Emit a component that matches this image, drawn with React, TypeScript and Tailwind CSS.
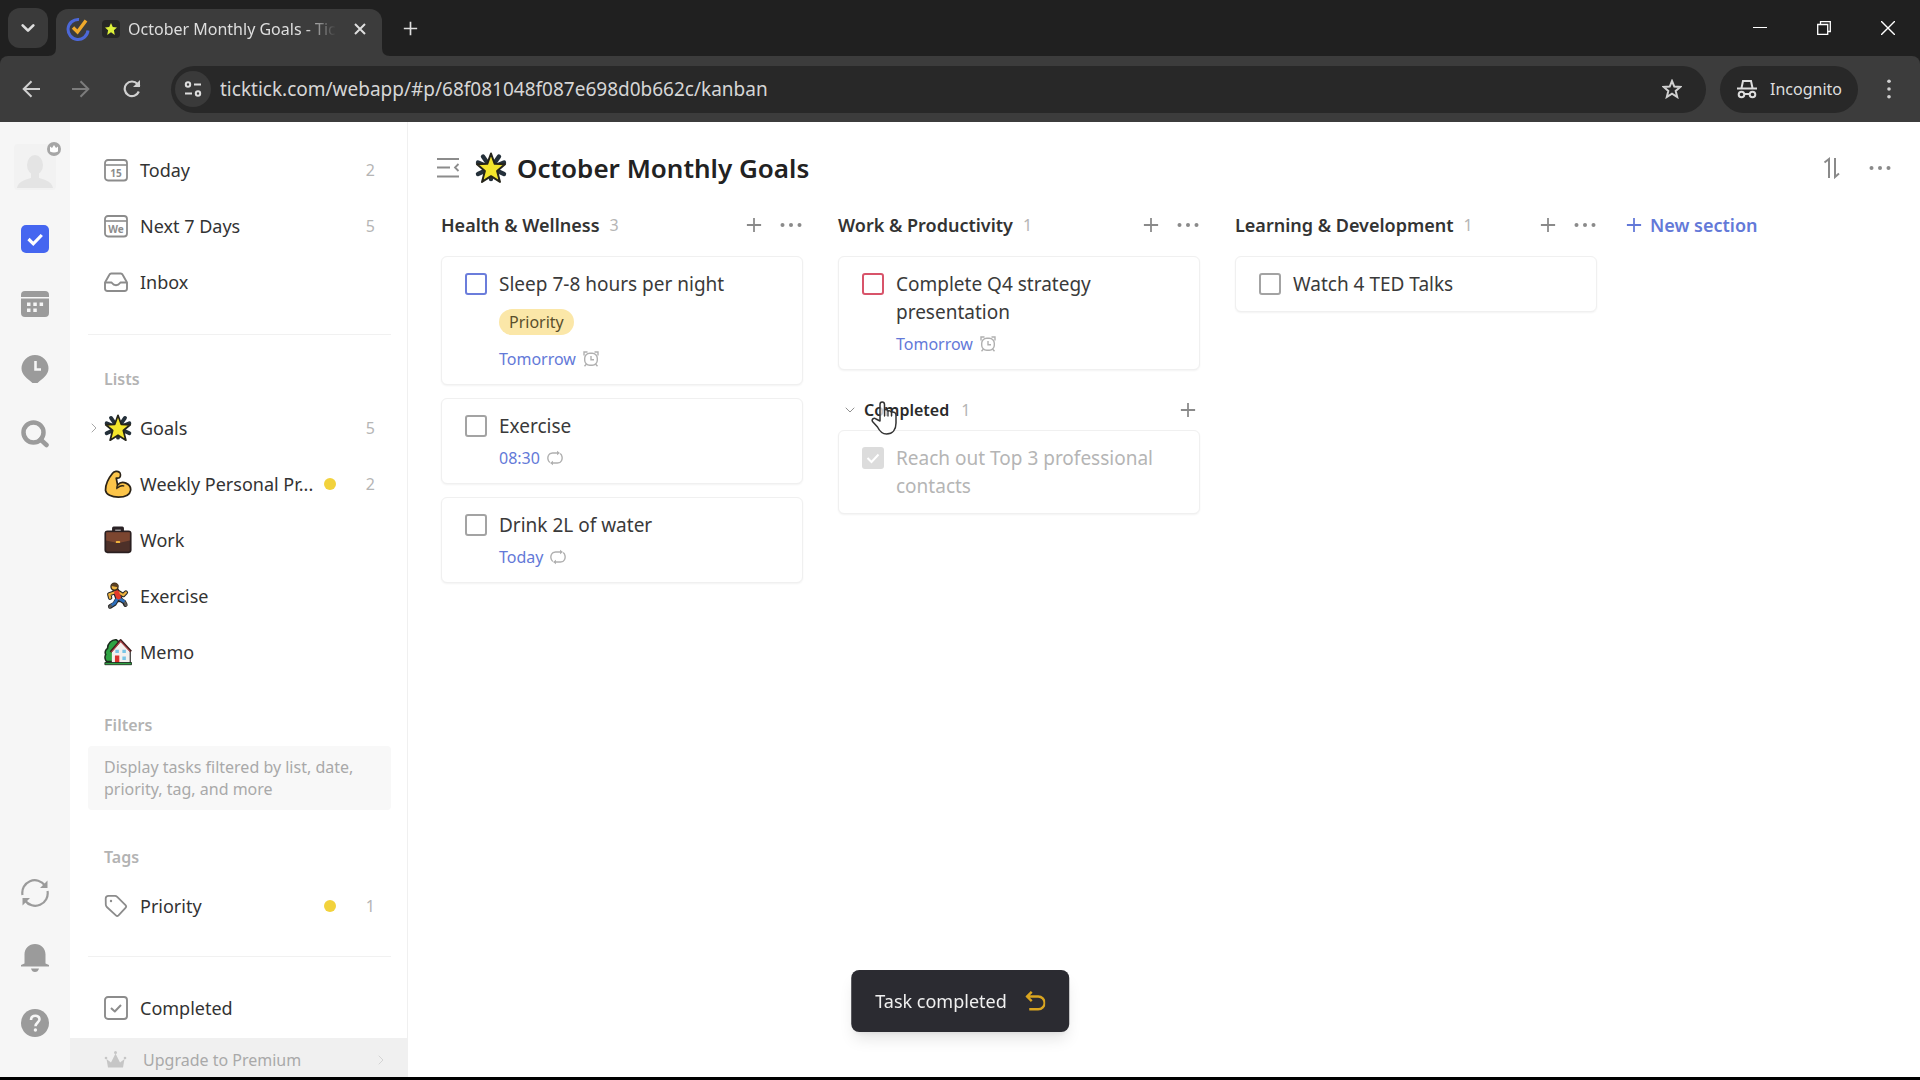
import { FC, ReactElement, ReactNode, useState } from "react";

type IconProps = { className?: string };

const StarEmoji: FC<IconProps> = ({ className }) => (
  <svg viewBox="0 0 32 32" className={className} aria-hidden="true">
    <g stroke="#24303a" strokeWidth="4.4" strokeLinecap="round">
      <path d="M16 16 8 4.500M16 16 24 4.500M16 16 3 10.500M16 16 29 10.500M16 16 3 22M16 16 29 22M16 16v11" />
    </g>
    <path
      d="M16 1.500 19.700 11.800l10.300.5-7.900 6.600 2.900 11L16 24.200 7 29.900l2.900-11L2 12.300l10.300-.5z"
      fill="#f4e62c"
      stroke="#25241a"
      strokeWidth="2"
      strokeLinejoin="round"
    />
  </svg>
);

const ArmEmoji: FC<IconProps> = ({ className }) => (
  <svg viewBox="0 0 32 32" className={className} aria-hidden="true">
    <path
      d="M10 3.500C11.500 1.500 15.500 1 17.500 2.500c1.500 1.200 1.500 4 .8 5.500-.6 1.500-2.300 1.500-4.300 1.200l1.500 8c2.500-3 6-3.700 9.500-2.200 4 1.800 6 5 5.300 8.600C29.500 28.500 23.500 31 16.500 31 8.500 31 2.500 28 1.800 23.500 1.500 17 5.500 9 10 3.500z"
      fill="#fcc54a"
      stroke="#2b2317"
      strokeWidth="2"
      strokeLinejoin="round"
    />
    <path d="M15.500 17.200c-.8 1.300-1 2.500-.8 4M16 20c2-2 4-2.300 6.500-1.800" fill="none" stroke="#2b2317" strokeWidth="1.600" strokeLinecap="round" />
  </svg>
);

const BriefcaseEmoji: FC<IconProps> = ({ className }) => (
  <svg viewBox="0 0 32 32" className={className} aria-hidden="true">
    <path d="M11 6V2.500h10V6" fill="none" stroke="#2a2226" strokeWidth="3.600" strokeLinejoin="round" />
    <rect x="1.500" y="6" width="29" height="24" rx="2.500" fill="#4d3029" stroke="#2a1f20" strokeWidth="2" />
    <path d="M2.500 7h27v9.500L18 19h-4L2.500 16.500z" fill="#7c4630" />
    <rect x="13.500" y="17" width="5" height="2.500" rx="1" fill="#f0b33c" />
  </svg>
);

const RunnerEmoji: FC<IconProps> = ({ className }) => (
  <svg viewBox="0 0 32 32" className={className} aria-hidden="true">
    <g fill="none" strokeLinecap="round" strokeLinejoin="round">
      <path d="M17 19l6 4 1.500 3M15 20l-3 5-5 3M17 12l5 3 3-3M12 12l-6 2 1 4" stroke="#262626" strokeWidth="5" />
      <path d="M14 11l3 8" stroke="#262626" strokeWidth="8" />
      <path d="M17 12l5 3 3-3M12 12l-6 2 1 4" stroke="#eeb23f" strokeWidth="2.600" />
      <path d="M16.500 18.500 22.500 22M15 19.500l-3 5-3 2" stroke="#2c6fbd" strokeWidth="3.200" />
      <path d="M24 23.500l1 3M8 27l-1.500 1.500" stroke="#5c5c5c" strokeWidth="2.600" />
      <path d="M14.500 12l2 5" stroke="#e33a2c" strokeWidth="5.600" />
    </g>
    <circle cx="12" cy="5.500" r="4" fill="#f0b744" stroke="#3a2c1c" strokeWidth="1.600" />
    <path d="M8.500 4.500c1-3.500 6-4 8-1l-.5 2.500z" fill="#5b4023" />
  </svg>
);

const HouseEmoji: FC<IconProps> = ({ className }) => (
  <svg viewBox="0 0 32 32" className={className} aria-hidden="true">
    <path d="M3 27c-2-2-2.500-6-1-8-1.500-3 0-6 2-7C4 6 9 1.500 14 2l4 3v22z" fill="#2fa343" stroke="#1c2b1e" strokeWidth="1.800" />
    <path d="M9 14.500 19 3.500l10 11V29H9z" fill="#f3f0ee" />
    <path d="M30 14.500V29" stroke="#33302f" strokeWidth="1.400" />
    <path d="M7.500 16 19 2.500 31 15.500" fill="none" stroke="#3a1d1d" strokeWidth="2.600" strokeLinejoin="round" />
    <path d="M8.500 16 19 3.800 30 15.500" fill="none" stroke="#b8474a" strokeWidth="1.200" />
    <path d="M13 13.500h4v3.500h-4zM21 13.500h4v3.500h-4zM21 21h4v4h-4z" fill="#79c5e6" />
    <path d="M12.500 20h5v9h-5z" fill="#d8322f" />
    <path d="M1 30.500h30.500V28H1z" fill="#2fa343" stroke="#1c2b1e" strokeWidth="1" />
  </svg>
);

const CalendarIcon: FC<{ text: string }> = ({ text }) => (
  <svg viewBox="0 0 24 24" className="size-6" aria-hidden="true">
    <rect x="1" y="2" width="22" height="20.500" rx="3" fill="none" stroke="#8c8c8c" strokeWidth="1.800" />
    <path d="M1 7h22" stroke="#8c8c8c" strokeWidth="1.600" />
    <text x="12" y="18.500" textAnchor="middle" fontSize="10" fontWeight="700" fill="#8c8c8c" fontFamily="Noto Sans, sans-serif">
      {text}
    </text>
  </svg>
);

const InboxIcon: FC = () => (
  <svg viewBox="0 0 24 24" className="size-6" fill="none" stroke="#8c8c8c" strokeWidth="1.900" strokeLinejoin="round" aria-hidden="true">
    <path d="M1 12.500 5.500 4.500Q6 3.500 7.200 3.500h9.600q1.200 0 1.700 1L23 12.500v6q0 2.500-2.500 2.500h-17Q1 21 1 18.500z" />
    <path d="M1 12.500h6.500c.5 0 1 2.700 4.500 2.700s4-2.700 4.500-2.700H23" />
  </svg>
);

const TagIcon: FC = () => (
  <svg viewBox="0 0 24 24" className="size-6" fill="none" stroke="#8c8c8c" strokeWidth="1.800" strokeLinejoin="round" aria-hidden="true">
    <path d="M4.500 1.800 11 1.900q1.200 0 2.200 1l8.300 8.300q1.300 1.300 0 2.600l-7 7.500q-1.300 1.300-2.600 0L2.800 13q-.9-1-1-2.200L1.700 4.500q0-2.700 2.800-2.700z" />
    <circle cx="7" cy="7" r="1.200" fill="#8c8c8c" stroke="none" />
  </svg>
);

const CompletedIcon: FC = () => (
  <svg viewBox="0 0 24 24" className="size-6" fill="none" stroke="#8c8c8c" strokeWidth="1.900" strokeLinejoin="round" aria-hidden="true">
    <rect x="1" y="1" width="22" height="22" rx="3" />
    <path d="m7 12 3.800 3.500L17 9" strokeWidth="2" />
  </svg>
);

const CrownIcon: FC = () => (
  <svg viewBox="0 0 24 24" className="size-6" aria-hidden="true">
    <path d="M4 19.500h15l1.500-8.500-4.500 3.500-4.500-9-4.500 9L2.500 11z" fill="#c6c6c6" />
    <circle cx="11.500" cy="4.500" r="1.500" fill="#c6c6c6" />
    <circle cx="2" cy="10" r="1.300" fill="#c6c6c6" />
    <circle cx="21" cy="10" r="1.300" fill="#c6c6c6" />
  </svg>
);

const Chevron: FC<IconProps> = ({ className }) => (
  <svg viewBox="0 0 12 12" className={className} fill="none" stroke="currentColor" strokeLinecap="round" strokeLinejoin="round" aria-hidden="true">
    <path d="m2 4 4 4 4-4" />
  </svg>
);

const Plus: FC<IconProps> = ({ className }) => (
  <svg viewBox="0 0 18 18" className={className} fill="none" stroke="currentColor" strokeWidth="2" aria-hidden="true">
    <path d="M9 1v16M1 9h16" />
  </svg>
);

const Dots: FC<IconProps> = ({ className }) => (
  <svg viewBox="0 0 22 22" className={className} fill="currentColor" aria-hidden="true">
    <circle cx="2.500" cy="11" r="2" />
    <circle cx="11" cy="11" r="2" />
    <circle cx="19.500" cy="11" r="2" />
  </svg>
);

const AlarmIcon: FC = () => (
  <svg viewBox="0 0 16 16" className="size-4" fill="none" stroke="#b0b0b0" strokeWidth="1.400" aria-hidden="true">
    <rect x="1.700" y="2.200" width="12.600" height="12" rx="5" />
    <path d="M8 5v3.800h3M1 4.500V1h3.500M15 4.500V1h-3.500M3.500 13 1.500 15.200M12.500 13l2 2.200" />
  </svg>
);

const RepeatIcon: FC = () => (
  <svg viewBox="0 0 16 16" className="size-4" fill="none" stroke="#b0b0b0" strokeWidth="1.400" aria-hidden="true">
    <path d="M2.800 12.500C.8 11 .3 7.500 1.500 5.300 2.300 3.700 3.800 3 5.500 3H11M13.200 3.500c2 1.500 2.500 5 1.300 7.200-.8 1.600-2.300 2.300-4 2.300H5" />
    <path d="M10 .8v4.400l3-2.200zM6 10.800v4.400L3 13z" fill="#b0b0b0" stroke="none" />
  </svg>
);

const BrowserChrome: FC = () => {
  const [url, setUrl] = useState("ticktick.com/webapp/#p/68f081048f087e698d0b662c/kanban");

  return (
    <header className="shrink-0 bg-[#202020] text-[#dedede]">
      <div className="flex h-14 items-center pl-2">
        <button aria-label="Search tabs" className="flex size-10 items-center justify-center rounded-xl bg-[#3a3a3a]">
          <Chevron className="size-4 stroke-2" />
        </button>
        <div className="flex h-full items-end">
          <svg viewBox="0 0 8 8" className="size-2" aria-hidden="true">
            <path d="M8 0v8H0q8 0 8-8z" fill="#3c3c3c" />
          </svg>
          <div className="flex h-[47px] w-[326px] items-center rounded-t-xl bg-[#3c3c3c] pb-2 pl-[10px] pr-[10px]">
            <svg viewBox="0 0 24 24" className="size-6 shrink-0" fill="none" aria-hidden="true">
              <path d="M13 2.500A10 10 0 1 0 22 13.500" stroke="#4c68d8" strokeWidth="3" />
              <path d="m7 10.500 4.500 4.500L20 3.500" stroke="#efa92b" strokeWidth="3.400" />
            </svg>
            <span className="ml-3 flex size-[18px] shrink-0 items-center justify-center rounded bg-[#262626]">
              <svg viewBox="0 0 12 12" className="size-3" aria-hidden="true">
                <path d="m6 0 1.800 4 4.200.4L8.900 7.200 9.800 12 6 9.300 2.200 12l.9-4.800L0 4.400 4.200 4z" fill="#dcf03a" />
              </svg>
            </span>
            <span className="ml-2 flex-1 whitespace-nowrap text-[16px] [mask-image:linear-gradient(to_right,black_85%,transparent)]">
              October Monthly Goals - Tic
            </span>
            <button aria-label="Close tab" className="ml-3 flex size-6 items-center justify-center">
              <svg viewBox="0 0 12 12" className="size-3" stroke="currentColor" strokeWidth="2" aria-hidden="true">
                <path d="m1 1 10 10M11 1 1 11" />
              </svg>
            </button>
          </div>
          <svg viewBox="0 0 8 8" className="size-2" aria-hidden="true">
            <path d="M0 0v8h8Q0 8 0 0z" fill="#3c3c3c" />
          </svg>
        </div>
        <button aria-label="New tab" className="ml-2 flex size-6 items-center justify-center">
          <Plus className="size-[15px]" />
        </button>
        <div className="ml-auto flex text-white">
          <button aria-label="Minimize" className="flex h-14 w-16 items-center justify-center">
            <svg viewBox="0 0 14 14" className="size-[14px]" stroke="currentColor" aria-hidden="true">
              <path d="M0 6.500h14" />
            </svg>
          </button>
          <button aria-label="Restore" className="flex h-14 w-16 items-center justify-center">
            <svg viewBox="0 0 14 14" className="size-[14px]" fill="none" stroke="currentColor" strokeWidth="1.300" aria-hidden="true">
              <path d="M.7 3.500h10v10H.7zM3.500 3.500V.7h9.800v9.800h-2.500" />
            </svg>
          </button>
          <button aria-label="Close window" className="flex h-14 w-16 items-center justify-center">
            <svg viewBox="0 0 14 14" className="size-[14px]" stroke="currentColor" strokeWidth="1.400" aria-hidden="true">
              <path d="m0 0 14 14M14 0 0 14" />
            </svg>
          </button>
        </div>
      </div>
      <div className="flex h-[66px] items-center rounded-t-lg bg-[#3c3c3c] pl-[22px] pr-5">
        <button aria-label="Back" className="flex size-[18px] items-center justify-center">
          <svg viewBox="0 0 18 18" className="size-[18px]" fill="none" stroke="#d0d0d0" strokeWidth="2" aria-hidden="true">
            <path d="M18 9H2M9.500 1.200 1.700 9l7.800 7.800" />
          </svg>
        </button>
        <button aria-label="Forward" className="ml-8 flex size-[18px] items-center justify-center">
          <svg viewBox="0 0 18 18" className="size-[18px]" fill="none" stroke="#7c7c7c" strokeWidth="2" aria-hidden="true">
            <path d="M0 9h16M8.500 1.200 16.300 9l-7.800 7.800" />
          </svg>
        </button>
        <button aria-label="Reload" className="ml-8 flex size-[20px] items-center justify-center">
          <svg viewBox="0 0 18 18" className="size-[18px]" fill="none" stroke="#d0d0d0" strokeWidth="2.200" aria-hidden="true">
            <path d="M15.800 11.500A7.300 7.300 0 1 1 14.500 4L16.500 6.500" />
            <path d="M17 0v7h-7z" fill="#d0d0d0" stroke="none" />
          </svg>
        </button>
        <div className="ml-[29px] flex h-[47px] flex-1 items-center rounded-full bg-[#282828] pl-1 pr-6">
          <button aria-label="View site information" className="flex size-9 items-center justify-center rounded-full bg-[#3a3a3a]">
            <svg viewBox="0 0 18 18" className="size-[18px]" fill="none" stroke="#dedede" strokeWidth="2" aria-hidden="true">
              <circle cx="4" cy="4.500" r="2.200" />
              <path d="M10 4.500h7M1 13.500h7" />
              <circle cx="14" cy="13.500" r="2.200" />
            </svg>
          </button>
          <input
            aria-label="Address"
            value={url}
            onChange={(e) => setUrl(e.target.value)}
            className="ml-[9px] min-w-0 flex-1 bg-transparent text-[19px] text-[#d6d6d6] outline-none"
          />
          <button aria-label="Bookmark this tab" className="flex size-5 items-center justify-center">
            <svg viewBox="0 0 20 20" className="size-5" fill="none" stroke="#d0d0d0" strokeWidth="2" aria-hidden="true">
              <path d="m10 2 2.300 5.600 6 .4-4.600 3.900L15.200 18 10 14.700 4.800 18l1.500-6.100L1.700 8l6-.4z" />
            </svg>
          </button>
        </div>
        <button className="ml-[14px] flex h-[47px] items-center gap-3 rounded-full bg-[#282828] px-4 text-[16px]">
          <svg viewBox="0 0 22 22" className="size-[22px]" fill="none" stroke="#dedede" strokeWidth="2" aria-hidden="true">
            <path d="M1 10.500h20M5.500 10 7 3h8l1.500 7" />
            <circle cx="5.500" cy="16.500" r="2.800" />
            <circle cx="16.500" cy="16.500" r="2.800" />
            <path d="M8.500 16h5" />
          </svg>
          Incognito
        </button>
        <button aria-label="Browser menu" className="ml-5 flex size-[22px] items-center justify-center">
          <Dots className="size-5 rotate-90 text-[#d0d0d0]" />
        </button>
      </div>
    </header>
  );
};

const RailButton: FC<{ label: string; children: ReactNode }> = ({ label, children }) => (
  <button aria-label={label} className="size-7 shrink-0">
    {children}
  </button>
);

const Rail: FC = () => (
  <nav aria-label="Modules" className="flex w-[70px] shrink-0 flex-col items-center bg-[#f6f6f6] pb-10 pt-[22px]">
    <button aria-label="Account" className="relative h-[46px] w-[42px] rounded bg-[#f2f2f2]">
      <svg viewBox="0 0 42 46" className="h-[46px] w-[42px]" aria-hidden="true">
        <ellipse cx="21" cy="21" rx="8" ry="10" fill="#e4e4e4" />
        <path d="M17 28h8v6c7 2 13 4 14 10H3c1-6 7-8 14-10z" fill="#e4e4e4" />
      </svg>
      <span className="absolute -right-[5px] -top-[2px] flex size-[14px] items-center justify-center rounded-full bg-[#a6a6a6]">
        <svg viewBox="0 0 8 8" className="size-2" aria-hidden="true">
          <path d="M0 1.500 2 3l2-3 2 3 2-1.500V6.500q-4 2-8 0z" fill="#fff" />
        </svg>
      </span>
    </button>
    <div className="mt-[35px] flex flex-col items-center gap-[37px]">
      <RailButton label="Tasks">
        <svg viewBox="0 0 28 28" aria-hidden="true">
          <rect width="28" height="28" rx="5" fill="#4566f0" />
          <path d="m7.500 14 4.800 4.800L20.800 10" fill="none" stroke="#fff" strokeWidth="3.200" />
        </svg>
      </RailButton>
      <RailButton label="Calendar">
        <svg viewBox="0 0 28 28" fill="#9b9b9b" aria-hidden="true">
          <path d="M0 7V5q0-4 4-4h20q4 0 4 4v2zM0 8.500h28V23q0 4-4 4H4q-4 0-4-4z" />
          <path d="M6 12.500h3.500V16H6zM12.300 12.500h3.500V16h-3.500zM18.600 12.500h3.500V16h-3.500zM6 18.500h3.500V22H6zM12.300 18.500h3.500V22h-3.500z" fill="#f6f6f6" />
        </svg>
      </RailButton>
      <RailButton label="Habit">
        <svg viewBox="0 0 28 28" aria-hidden="true">
          <path d="M14 0a13.500 13.500 0 0 1 13.500 13.300c0 7-6.500 10.700-11.500 15.200q-2 1.500-4 0C7 24 .5 20.300.5 13.300A13.500 13.500 0 0 1 14 0z" fill="#9b9b9b" />
          <path d="M14.500 6v8.500H20" fill="none" stroke="#f6f6f6" strokeWidth="2.600" />
        </svg>
      </RailButton>
      <RailButton label="Search">
        <svg viewBox="0 0 28 28" fill="none" stroke="#9b9b9b" strokeWidth="4.500" aria-hidden="true">
          <circle cx="12.500" cy="12.500" r="10" />
          <path d="m19.500 19.500 6 5.500" strokeLinecap="round" />
        </svg>
      </RailButton>
    </div>
    <div className="mt-auto flex flex-col items-center gap-[37px]">
      <RailButton label="Sync">
        <svg viewBox="0 0 28 28" fill="none" stroke="#9b9b9b" strokeWidth="2.200" aria-hidden="true">
          <path d="M1.500 16A12.500 12.500 0 0 1 24 6.500M26.500 12A12.500 12.500 0 0 1 4 21.500" />
          <path d="M26.500 1.500V9h-7.500zM1.500 26.500V19H9z" fill="#9b9b9b" stroke="none" />
        </svg>
      </RailButton>
      <RailButton label="Notifications">
        <svg viewBox="0 0 28 28" fill="#9b9b9b" aria-hidden="true">
          <path d="M14 0C20 0 24.500 4.500 24.500 10.500V19.500L28 21v1.500H0V21l3.500-1.500v-9C3.500 4.500 8 0 14 0zM10 24.500h8q-1 3.500-4 3.500t-4-3.500z" />
        </svg>
      </RailButton>
      <RailButton label="Help">
        <svg viewBox="0 0 28 28" aria-hidden="true">
          <circle cx="14" cy="14" r="14" fill="#9b9b9b" />
          <path d="M10 11c0-5.500 8.500-5.500 8.500-.7 0 3.200-4 3.300-4 7" fill="none" stroke="#f6f6f6" strokeWidth="2.600" />
          <circle cx="14.400" cy="21" r="1.700" fill="#f6f6f6" />
        </svg>
      </RailButton>
    </div>
  </nav>
);

type SideRowProps = {
  icon: ReactNode;
  label: string;
  count?: number;
  dot?: boolean;
  expandable?: boolean;
};

const SideRow: FC<SideRowProps> = ({ icon, label, count, dot, expandable }) => (
  <li>
    <a href="#" className="flex h-14 items-center pl-[14px] pr-8 text-[18px] text-[#333]">
      <span className="flex w-5 shrink-0 justify-center text-[#a8a8a8]">
        {expandable && <Chevron className="size-3 -rotate-90" />}
      </span>
      <span className="mr-2 flex w-7 shrink-0 items-center">{icon}</span>
      <span className="flex-1 whitespace-nowrap">{label}</span>
      {dot && <span className="size-3 shrink-0 rounded-full bg-[#f2d23c]" />}
      {count !== undefined && <span className="w-[39px] shrink-0 text-right text-[16px] text-[#b5b5b5]">{count}</span>}
    </a>
  </li>
);

const Sidebar: FC = () => (
  <aside className="flex w-[338px] shrink-0 flex-col overflow-hidden border-r border-[#f0f0f0] bg-white pt-5">
    <ul>
      <SideRow icon={<CalendarIcon text="15" />} label="Today" count={2} />
      <SideRow icon={<CalendarIcon text="We" />} label="Next 7 Days" count={5} />
      <SideRow icon={<InboxIcon />} label="Inbox" />
    </ul>
    <hr className="ml-[18px] mr-4 mt-6 border-[#f1f1f1]" />
    <h2 className="mt-8 pl-[34px] text-[16px] font-semibold leading-6 text-[#b3b3b3]">Lists</h2>
    <ul className="mt-[9px]">
      <SideRow icon={<StarEmoji className="size-7" />} label="Goals" count={5} expandable />
      <SideRow icon={<ArmEmoji className="size-7" />} label="Weekly Personal Pr..." count={2} dot />
      <SideRow icon={<BriefcaseEmoji className="size-7" />} label="Work" />
      <SideRow icon={<RunnerEmoji className="size-7" />} label="Exercise" />
      <SideRow icon={<HouseEmoji className="size-7" />} label="Memo" />
    </ul>
    <h2 className="mt-[33px] pl-[34px] text-[16px] font-semibold leading-6 text-[#b3b3b3]">Filters</h2>
    <p className="ml-[18px] mr-4 mt-[9px] rounded bg-[#f8f8f8] py-[10px] pl-4 pr-2 text-[16px] leading-[22px] text-[#a9a9a9]">
      Display tasks filtered by list, date, priority, tag, and more
    </p>
    <h2 className="mt-[35px] pl-[34px] text-[16px] font-semibold leading-6 text-[#b3b3b3]">Tags</h2>
    <ul className="mt-[9px]">
      <SideRow icon={<TagIcon />} label="Priority" count={1} dot />
    </ul>
    <hr className="ml-[18px] mr-4 mt-[22px] border-[#f1f1f1]" />
    <ul className="mt-[23px]">
      <SideRow icon={<CompletedIcon />} label="Completed" />
    </ul>
    <div className="mt-auto h-[39px] shrink-0 overflow-hidden bg-[#f0f0f0]">
      <button className="flex h-11 w-full items-center pl-[34px] pr-5 text-[16px] text-[#a9a9a9]">
        <CrownIcon />
        <span className="ml-[15px]">Upgrade to Premium</span>
        <Chevron className="ml-auto size-3 -rotate-90 text-[#d4d4d4]" />
      </button>
    </div>
  </aside>
);

type Task = {
  id: string;
  title: string;
  priority?: "low" | "high";
  tag?: string;
  due?: string;
  badge?: "alarm" | "repeat";
  done?: boolean;
};

const boxColors = {
  none: "border-[#a3a3a3]",
  low: "border-[#6b7ddb]",
  high: "border-[#d8546a]",
};

const TaskCard: FC<{ task: Task }> = ({ task }) => {
  const [done, setDone] = useState(!!task.done);

  return (
    <article className="flex gap-3 rounded-md border border-[#f0f0f0] bg-white px-[23px] py-[13px] shadow-xs">
      <span className="relative mt-[3px] size-[22px] shrink-0">
        <input
          id={task.id}
          type="checkbox"
          checked={done}
          onChange={() => setDone(!done)}
          className={`block size-[22px] appearance-none rounded-[3px] border-2 checked:border-[#dcdcdc] checked:bg-[#dcdcdc] ${
            boxColors[task.priority ?? "none"]
          }`}
        />
        {done && (
          <svg viewBox="0 0 22 22" className="pointer-events-none absolute inset-0" fill="none" stroke="#fff" strokeWidth="2" aria-hidden="true">
            <path d="m5.500 11 4 4 7-7.500" />
          </svg>
        )}
      </span>
      <div className="min-w-0 flex-1">
        <label htmlFor={task.id} className={`block text-[19px] leading-7 ${done ? "text-[#b5b5b5]" : "text-[#3a3a3a]"}`}>
          {task.title}
        </label>
        {task.tag && (
          <span className="mb-3 mt-[11px] flex h-[26px] w-fit items-center rounded-full bg-[#fbe7a8] px-[10px] text-[16px] text-[#5a4f2c]">
            {task.tag}
          </span>
        )}
        {task.due && (
          <div className={`flex h-6 items-center gap-[7px] text-[16px] text-[#6379d8] ${task.tag ? "" : "mt-[6px]"}`}>
            {task.due}
            {task.badge === "alarm" ? <AlarmIcon /> : <RepeatIcon />}
          </div>
        )}
      </div>
    </article>
  );
};

const Column: FC<{ title: string; tasks: Task[]; children?: ReactNode }> = ({ title, tasks, children }) => (
  <section className="w-[362px] shrink-0">
    <div className="flex h-8 items-center pr-px text-[#8a8a8a]">
      <h2 className="text-[18px] font-semibold text-[#333]">{title}</h2>
      <span className="ml-[10px] text-[16px] text-[#b5b5b5]">{tasks.length}</span>
      <button aria-label={`Add task to ${title}`} className="ml-auto size-4">
        <Plus className="size-4" />
      </button>
      <button aria-label={`${title} options`} className="ml-[18px] size-[22px]">
        <Dots className="size-[22px]" />
      </button>
    </div>
    <div className="mt-[15px] flex flex-col gap-[13px]">
      {tasks.map((task) => (
        <TaskCard key={task.id} task={task} />
      ))}
    </div>
    {children}
  </section>
);

const healthTasks: Task[] = [
  { id: "sleep", title: "Sleep 7-8 hours per night", priority: "low", tag: "Priority", due: "Tomorrow", badge: "alarm" },
  { id: "exercise", title: "Exercise", due: "08:30", badge: "repeat" },
  { id: "water", title: "Drink 2L of water", due: "Today", badge: "repeat" },
];

const workTasks: Task[] = [
  { id: "strategy", title: "Complete Q4 strategy presentation", priority: "high", due: "Tomorrow", badge: "alarm" },
];

const learningTasks: Task[] = [{ id: "ted", title: "Watch 4 TED Talks" }];

const CompletedGroup: FC = () => (
  <div className="mt-[26px]">
    <div className="relative flex h-7 items-center pl-[6px] pr-1">
      <button className="flex items-center text-[16px] font-semibold text-[#2a2a2a]">
        <Chevron className="mr-2 size-3 text-[#909090]" />
        Completed
      </button>
      <span className="ml-3 text-[16px] text-[#b5b5b5]">1</span>
      <button aria-label="Add completed task" className="ml-auto size-4 text-[#8a8a8a]">
        <Plus className="size-4" />
      </button>
      {/* pointer resting on the group header */}
      <svg viewBox="0 0 26 34" className="pointer-events-none absolute left-[33px] top-[5px] h-[34px] w-[26px]" aria-hidden="true">
        <path
          d="M9 20V3.500Q9 1 11.200 1t2.300 2.500V9q2-1.500 3.500 1 2-1 3.300 1.200Q25 10.500 25 14v8c0 6-3 11-9.500 11-5 0-7-3-9-7L1.500 20.500C.3 18 3 16.500 5 18z"
          fill="#fff"
          fillOpacity="0.750"
          stroke="#333"
          strokeWidth="1.500"
          strokeLinejoin="round"
        />
        <path d="M13.500 9v6M17 10v5M20.500 11.500V15" stroke="#333" strokeWidth="1.300" strokeLinecap="round" />
      </svg>
    </div>
    <div className="mt-[6px]">
      <TaskCard task={{ id: "contacts", title: "Reach out Top 3 professional contacts", done: true }} />
    </div>
  </div>
);

const Board: FC = () => (
  <main className="relative min-w-0 flex-1 bg-white pt-6">
    <div className="flex h-11 items-center pl-7 pr-[29px]">
      <button aria-label="Collapse sidebar" className="size-6">
        <svg viewBox="0 0 24 24" className="size-6" fill="none" stroke="#8c8c8c" strokeWidth="2" aria-hidden="true">
          <path d="M1 3h22M1 11.500h13M1 20.500h22" />
          <path d="m22.500 8-3.500 3.500 3.500 3.500" strokeWidth="1.800" />
        </svg>
      </button>
      <StarEmoji className="ml-[15px] size-8" />
      <h1 className="ml-[10px] text-[26px] font-semibold text-[#222]">October Monthly Goals</h1>
      <button aria-label="Sort" className="ml-auto h-[22px] w-[18px]">
        <svg viewBox="0 0 18 22" className="h-[22px] w-[18px]" fill="none" stroke="#8a8a8a" strokeWidth="2" aria-hidden="true">
          <path d="M1.500 5.500 6 2v19M12 1v19l4-3.500" />
        </svg>
      </button>
      <button aria-label="More options" className="ml-7 size-[22px] text-[#8a8a8a]">
        <Dots className="size-[22px]" />
      </button>
    </div>
    <div className="mt-[19px] flex items-start gap-[35px] pl-[33px]">
      <Column title="Health & Wellness" tasks={healthTasks} />
      <Column title="Work & Productivity" tasks={workTasks}>
        <CompletedGroup />
      </Column>
      <Column title="Learning & Development" tasks={learningTasks} />
      <button className="-ml-[6px] flex h-8 shrink-0 items-center gap-2 text-[18px] font-semibold text-[#6379d8]">
        <Plus className="size-4" />
        New section
      </button>
    </div>
    <div className="fixed bottom-12 left-1/2 flex h-[62px] -translate-x-1/2 items-center gap-[18px] rounded-lg bg-[#2b2b31] px-6 text-[18px] text-[#f0f0f0] shadow-lg">
      <p role="status">Task completed</p>
      <button aria-label="Undo">
        <svg viewBox="0 0 20 20" className="size-5" fill="none" stroke="#d9a520" strokeWidth="2.400" aria-hidden="true">
          <path d="M1.500 5.500H13a6 6 0 0 1 0 12.800H4M6.500.8 1.800 5.500l4.700 4.700" />
        </svg>
      </button>
    </div>
  </main>
);

const App: FC = (): ReactElement => (
  <div className="flex h-screen flex-col border-b-[3px] border-black bg-white font-['Noto_Sans','Open_Sans',sans-serif]">
    <BrowserChrome />
    <div className="flex min-h-0 flex-1">
      <Rail />
      <Sidebar />
      <Board />
    </div>
  </div>
);

export default App;
